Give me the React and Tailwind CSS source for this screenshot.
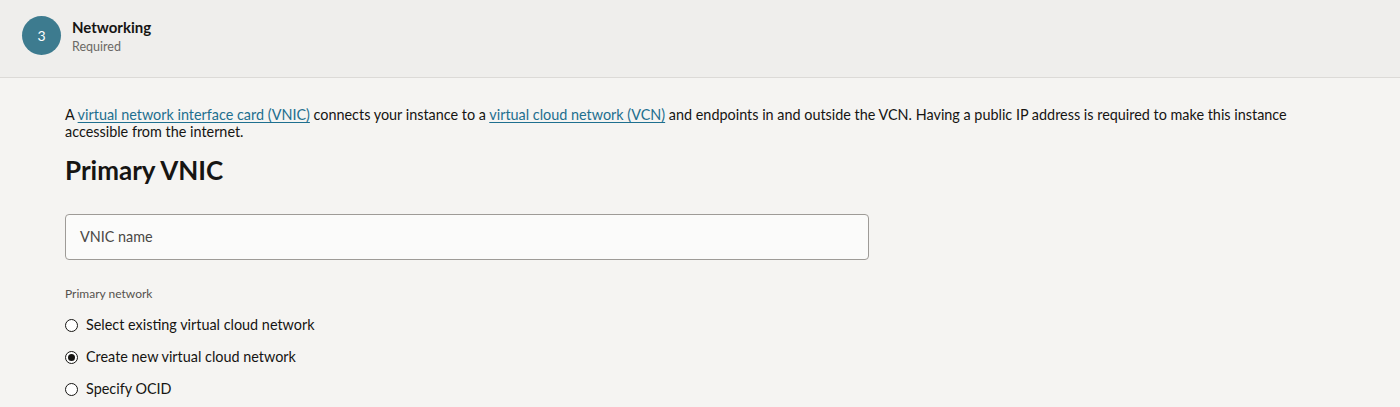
export default function App() {
  const font = { fontFamily: 'Lato, "Noto Sans", sans-serif' };
  return (
    <div className="w-[1400px] h-[407px] bg-[#f5f4f2] text-[#161513] overflow-hidden" style={font}>
      <div className="h-[78px] bg-[#efeeec] border-b border-[#dcdad7] flex items-start pl-[22px] pt-[16px]">
        <div className="w-[39px] h-[39px] rounded-full bg-[#3d7b8f] text-white flex items-center justify-center text-[14px]">3</div>
        <div className="ml-[11px] flex flex-col pt-[1px]">
          <div className="text-[15px] font-bold leading-[20px]">Networking</div>
          <div className="text-[12.5px] text-[#6b6965] leading-[18px] mt-[1px]">Required</div>
        </div>
      </div>
      <div className="pl-[65px] pt-[28px]">
        <p className="text-[14.4px] leading-[17px] w-[1260px]">
          A <a className="text-[#1e6f8f] underline underline-offset-2">virtual network interface card (VNIC)</a> connects your instance to a{' '}
          <a className="text-[#1e6f8f] underline underline-offset-2">virtual cloud network (VCN)</a> and endpoints in and outside the VCN. Having a public IP address is required to make this instance accessible from the internet.
        </p>
        <h2 className="text-[26px] font-bold leading-[32px] mt-[14px]">Primary VNIC</h2>
        <div className="mt-[28px] w-[804px] h-[46px] rounded-[4px] border border-[#9e9b97] bg-[#fbfbfa] flex items-center pl-[14px] text-[14.4px] text-[#4a4845]">
          VNIC name
        </div>
        <div className="mt-[26px] text-[12px] text-[#55524e] leading-[16px]">Primary network</div>
        <div className="mt-[14px] flex flex-col gap-[14px]">
          {[
            ['Select existing virtual cloud network', false],
            ['Create new virtual cloud network', true],
            ['Specify OCID', false],
          ].map(([label, checked]) => (
            <div key={label} className="flex items-center h-[18px]">
              <div className="w-[13px] h-[13px] rounded-full border border-[#161513] flex items-center justify-center bg-white">
                {checked && <div className="w-[7px] h-[7px] rounded-full bg-[#161513]" />}
              </div>
              <span className="ml-[8px] text-[14.4px]">{label}</span>
            </div>
          ))}
        </div>
      </div>
    </div>
  );
}
